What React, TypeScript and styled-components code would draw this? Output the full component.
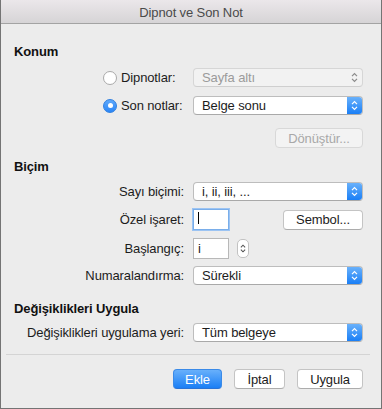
import React from "react";
import styled, { createGlobalStyle, css } from "styled-components";

const GlobalStyle = createGlobalStyle`
  html, body {
    margin: 0;
    padding: 0;
    background: #ececec;
  }
  body {
    font-family: "Liberation Sans", Arial, sans-serif;
    font-size: 13px;
    letter-spacing: -0.12px;
    color: #1c1c1c;
  }
`;

const Chevrons = ({ color }: { color: string }) => (
  <svg width="7" height="11" viewBox="0 0 7 11">
    <path d="M1 4.2 L3.5 1.6 L6 4.2" fill="none" stroke={color} strokeWidth="1.2" />
    <path d="M1 6.8 L3.5 9.4 L6 6.8" fill="none" stroke={color} strokeWidth="1.2" />
  </svg>
);

const Popup = ({ value, disabled }: { value: string; disabled?: boolean }) => (
  <PopupBox $disabled={disabled}>
    <PopupText $disabled={disabled}>{value}</PopupText>
    <PopupArrow $disabled={disabled}>
      <Chevrons color={disabled ? "#8a8a8a" : "#ffffff"} />
    </PopupArrow>
  </PopupBox>
);

const App = () => {
  return (
    <>
      <GlobalStyle />
      <Window>
        <TitleBar>Dipnot ve Son Not</TitleBar>
        <Body>
          <Heading $top={20}>Konum</Heading>

          <Row $top={8}>
            <RadioCell>
              <RadioGroup>
                <Radio />
                <span>Dipnotlar:</span>
              </RadioGroup>
            </RadioCell>
            <Popup value="Sayfa altı" disabled />
          </Row>

          <Row $top={9}>
            <RadioCell>
              <RadioGroup>
                <Radio $checked />
                <span>Son notlar:</span>
              </RadioGroup>
            </RadioCell>
            <Popup value="Belge sonu" />
          </Row>

          <ButtonRow $top={13}>
            <PushButton $width={88} $disabled>
              Dönüştür...
            </PushButton>
          </ButtonRow>

          <Heading $top={11}>Biçim</Heading>

          <Row $top={7}>
            <Label>Sayı biçimi:</Label>
            <Popup value="i, ii, iii, ..." />
          </Row>

          <Row $top={8}>
            <Label>Özel işaret:</Label>
            <FieldLine>
              <TextField $focused>
                <Caret />
              </TextField>
              <PushButton $width={80}>Sembol...</PushButton>
            </FieldLine>
          </Row>

          <Row $top={8}>
            <Label>Başlangıç:</Label>
            <FieldLine>
              <TextField>i</TextField>
              <Stepper>
                <Chevrons color="#555555" />
              </Stepper>
            </FieldLine>
          </Row>

          <Row $top={7}>
            <Label>Numaralandırma:</Label>
            <Popup value="Sürekli" />
          </Row>

          <Heading $top={16}>Değişiklikleri Uygula</Heading>

          <Row $top={6}>
            <Label>Değişiklikleri uygulama yeri:</Label>
            <Popup value="Tüm belgeye" />
          </Row>
        </Body>

        <Separator />

        <Footer>
          <PushButton $width={49} $primary>
            Ekle
          </PushButton>
          <PushButton $width={51}>İptal</PushButton>
          <PushButton $width={66}>Uygula</PushButton>
        </Footer>
      </Window>
    </>
  );
};

export default App;

const Window = styled.div`
  box-sizing: border-box;
  width: 382px;
  height: 409px;
  background: #ececec;
  border: 1px solid #747474;
  border-top: none;
  display: flex;
  flex-direction: column;
`;

const TitleBar = styled.div`
  height: 22px;
  flex-shrink: 0;
  display: flex;
  align-items: center;
  justify-content: center;
  background: linear-gradient(#ebe7ea, #d6d4d6);
  border-bottom: 1px solid #a3a3a3;
  color: #4a4a4a;
  font-size: 13px;
  padding-top: 1px;
  box-sizing: content-box;
`;

const Body = styled.div`
  padding: 0 18px 0 13px;
  display: flex;
  flex-direction: column;
`;

const Heading = styled.div<{ $top: number }>`
  margin-top: ${(p) => p.$top}px;
  font-weight: bold;
  font-size: 13px;
  line-height: 16px;
  color: #111;
`;

const Row = styled.div<{ $top: number }>`
  margin-top: ${(p) => p.$top}px;
  display: grid;
  grid-template-columns: 170px 170px;
  column-gap: 9px;
  align-items: center;
`;

const Label = styled.div`
  text-align: right;
  white-space: nowrap;
  line-height: 16px;
`;

const RadioCell = styled.div`
  display: flex;
  justify-content: flex-end;
`;

const RadioGroup = styled.label`
  width: 81px;
  display: flex;
  align-items: center;
  gap: 4px;
  white-space: nowrap;
  line-height: 16px;
`;

const Radio = styled.span<{ $checked?: boolean }>`
  box-sizing: border-box;
  width: 14px;
  height: 14px;
  border-radius: 50%;
  flex-shrink: 0;
  position: relative;
  ${(p) =>
    p.$checked
      ? css`
          background: linear-gradient(#5fa9fb, #2a86f7);
          border: 1px solid #2f7fe0;
          &::after {
            content: "";
            position: absolute;
            left: 3.5px;
            top: 3.5px;
            width: 5px;
            height: 5px;
            border-radius: 50%;
            background: #fff;
          }
        `
      : css`
          background: #fff;
          border: 1px solid #a9a9a9;
        `}
`;

const PopupBox = styled.div<{ $disabled?: boolean }>`
  box-sizing: border-box;
  height: 19px;
  display: flex;
  align-items: stretch;
  border-radius: 4px;
  border: 1px solid ${(p) => (p.$disabled ? "#d6d6d6" : "#bdbdbd")};
  border-bottom-color: ${(p) => (p.$disabled ? "#cfcfcf" : "#a9a9a9")};
  background: ${(p) => (p.$disabled ? "#f2f2f2" : "#ffffff")};
  overflow: hidden;
`;

const PopupText = styled.div<{ $disabled?: boolean }>`
  flex: 1;
  padding-left: 8px;
  display: flex;
  align-items: center;
  color: ${(p) => (p.$disabled ? "#9b9b9b" : "#1c1c1c")};
  white-space: nowrap;
`;

const PopupArrow = styled.div<{ $disabled?: boolean }>`
  width: 15px;
  display: flex;
  align-items: center;
  justify-content: center;
  ${(p) =>
    !p.$disabled &&
    css`
      background: linear-gradient(#69b1fb, #1a7ff6);
    `}
`;

const ButtonRow = styled.div<{ $top: number }>`
  margin-top: ${(p) => p.$top}px;
  display: flex;
  justify-content: flex-end;
`;

const PushButton = styled.div<{ $width: number; $primary?: boolean; $disabled?: boolean }>`
  box-sizing: border-box;
  width: ${(p) => p.$width}px;
  height: 20px;
  display: flex;
  align-items: center;
  justify-content: center;
  border-radius: 4px;
  white-space: nowrap;
  border: 1px solid #c4c4c4;
  border-bottom-color: #acacac;
  background: #ffffff;
  color: #1c1c1c;
  ${(p) =>
    p.$disabled &&
    css`
      background: #f3f3f3;
      border-color: #d8d8d8;
      color: #a8a8a8;
    `}
  ${(p) =>
    p.$primary &&
    css`
      background: linear-gradient(#68b0fb, #1b7ff5);
      border-color: #3a8ae8;
      border-bottom-color: #2a73d6;
      color: #ffffff;
    `}
`;

const FieldLine = styled.div`
  display: flex;
  align-items: center;
  justify-content: space-between;
`;

const TextField = styled.div<{ $focused?: boolean }>`
  box-sizing: border-box;
  width: 36px;
  height: 21px;
  background: #fff;
  padding: 2px 0 0 4px;
  line-height: 16px;
  border: 1px solid ${(p) => (p.$focused ? "#7aaeea" : "#b8b8b8")};
  ${(p) =>
    p.$focused &&
    css`
      box-shadow: 0 0 0 1px #9cc4f3;
    `}
`;

const Caret = styled.span`
  display: block;
  width: 1px;
  height: 12px;
  background: #000;
`;

const Stepper = styled.div`
  box-sizing: border-box;
  width: 12px;
  height: 19px;
  margin-left: 8px;
  margin-right: auto;
  border: 1px solid #c2c2c2;
  border-radius: 5px;
  background: #fff;
  display: flex;
  align-items: center;
  justify-content: center;
  & svg {
    width: 6px;
  }
`;

const Separator = styled.div`
  height: 1px;
  margin: 12px 11px 0 5px;
  background: #d4d4d4;
`;

const Footer = styled.div`
  margin-top: 14px;
  padding-right: 18px;
  display: flex;
  justify-content: flex-end;
  gap: 12px;
`;
